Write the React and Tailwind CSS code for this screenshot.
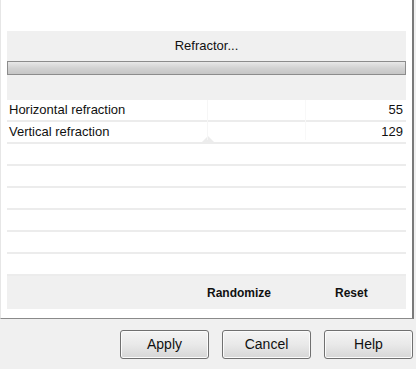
import React from 'react';

const rows = [
  { label: 'Horizontal refraction', value: '55' },
  { label: 'Vertical refraction', value: '129' },
  null, null, null, null, null, null,
];

const DialogButton = ({ label }) => (
  <button className="w-[89px] h-[29px] rounded-[3px] border border-[#707070] bg-gradient-to-b from-[#f4f4f4] via-[#e9e9e9] to-[#d6d6d6] text-[14px] text-[#111] shadow-[inset_0_0_0_1px_#fbfbfb]">
    {label}
  </button>
);

const App = () => {
  return (
    <div className="w-[416px] h-[369px] bg-[#f0f0f0] overflow-hidden" style={{ fontFamily: '"Liberation Sans", Arial, sans-serif' }}>
      {/* main white panel */}
      <div className="w-[414px] h-[319px] bg-white border-r-2 border-b border-r-[#7a7a7a] border-b-[#8a8a8a] border-l border-l-[#e6e6e6] pt-[31px] px-[6px]">
        <div className="bg-[#f0f0f0] h-[69px] flex flex-col">
          <div className="h-[30px] flex items-center justify-center text-[13px] text-[#111]">Refractor...</div>
          <div className="h-[14px] border border-[#8c8c8c] bg-gradient-to-b from-[#e8e8e8] via-[#d2d2d2] to-[#c6c6c6]" />
        </div>

        <div className="relative">
          {rows.map((row, i) => (
            <div key={i} className="h-[22px] flex items-center justify-between px-[2px] border-b-2 border-[#ececec] text-[13px] text-[#111]">
              {row && (
                <>
                  <span>{row.label}</span>
                  <span className="pr-[1px]">{row.value}</span>
                </>
              )}
            </div>
          ))}
          <div className="absolute left-[194px] top-[36px] w-0 h-0 border-l-[7px] border-r-[7px] border-b-[7px] border-l-transparent border-r-transparent border-b-[#ececec]" />
          <div className="absolute left-[200px] top-[0px] w-[1px] h-[40px] bg-[#f6f6f6]" />
          <div className="absolute left-[298px] top-[0px] w-[1px] h-[40px] bg-[#f8f8f8]" />
        </div>

        <div className="bg-[#f0f0f0] h-[33px] flex items-center text-[12px] font-bold text-[#111]">
          <span className="ml-[200px]">Randomize</span>
          <span className="ml-[64px]">Reset</span>
        </div>
      </div>

      <div className="flex justify-end gap-[13px] pt-[11px] pr-[3px]">
        <DialogButton label="Apply" />
        <DialogButton label="Cancel" />
        <DialogButton label="Help" />
      </div>
    </div>
  );
};

export default App;
